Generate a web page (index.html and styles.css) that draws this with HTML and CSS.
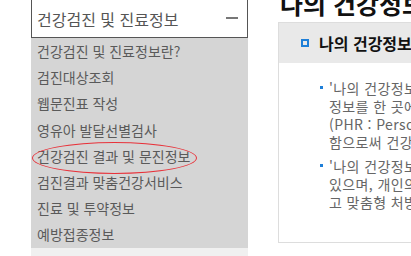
FILE: index.html
```html
<!DOCTYPE html>
<html lang="ko">
<head>
  <meta charset="UTF-8">
  <meta name="viewport" content="width=device-width, initial-scale=1.0">
  <title>나의 건강정보</title>
  <link rel="stylesheet" href="styles.css">
</head>
<body>
  <div class="page">
    <div class="sidebar">
      <div class="menu-head">
        <span>건강검진 및 진료정보</span>
        <span class="minus"></span>
      </div>
      <ul class="menu-list">
        <li>건강검진 및 진료정보란?</li>
        <li>검진대상조회</li>
        <li>웹문진표 작성</li>
        <li>영유아 발달선별검사</li>
        <li class="marked">건강검진 결과 및 문진정보<span class="circle"></span></li>
        <li>검진결과 맞춤건강서비스</li>
        <li>진료 및 투약정보</li>
        <li>예방접종정보</li>
      </ul>
      <div class="menu-next"></div>
    </div>

    <div class="content">
      <h2 class="page-title">나의 건강정보</h2>
      <div class="info-box">
        <div class="info-head">
          <span class="sq-icon"></span>
          <strong>나의 건강정보</strong>
        </div>
        <ul class="info-body">
          <li>'나의 건강정보'<br>정보를 한 곳에<br>(PHR : Personal<br>함으로써 건강</li>
          <li>'나의 건강정보'<br>있으며, 개인의<br>고 맞춤형 처방</li>
        </ul>
      </div>
    </div>
  </div>
</body>
</html>
```

FILE: styles.css
```css
body {
  margin: 0;
  font-family: "Noto Sans CJK KR", "Noto Sans", sans-serif;
  background: #fff;
  overflow: hidden;
}

.page {
  display: flex;
  width: 411px;
  height: 256px;
  overflow: hidden;
}

/* left menu */
.sidebar {
  flex: 0 0 217px;
  margin-left: 31px;
  margin-top: -1px;
}

.menu-head {
  display: flex;
  justify-content: space-between;
  align-items: center;
  height: 37px;
  padding: 0 9px 0 5px;
  border: 1px solid #555;
  color: #555;
  font-size: 16px;
}

.minus {
  width: 12px;
  height: 2px;
  background: #777;
  margin-top: -2px;
}

.menu-list {
  list-style: none;
  margin: 0;
  padding: 0 0 0 6px;
  background: #d5d5d5;
  color: #5a5a5a;
  font-size: 14px;
  line-height: 26.2px;
}

.marked {
  position: relative;
}

.circle {
  position: absolute;
  left: -5px;
  top: -1px;
  width: 163px;
  height: 30px;
  border: 1px solid #e8323a;
  border-radius: 50%;
}

.menu-next {
  height: 20px;
  background: #f0f0f0;
}

/* right content */
.content {
  flex: 0 0 auto;
  margin-left: 30px;
}

.page-title {
  margin: -12px 0 0 2px;
  height: 34px;
  font-size: 25px;
  line-height: 30px;
  font-weight: bold;
  color: #111;
  white-space: nowrap;
}

.info-box {
  width: 420px;
  border: 1px solid #ddd;
  white-space: nowrap;
}

.info-head {
  display: flex;
  align-items: center;
  height: 40px;
  padding-left: 22px;
  background: #e9e9e9;
  font-size: 16px;
  color: #111;
}

.sq-icon {
  width: 4px;
  height: 4px;
  border: 2px solid #1e7fd8;
  margin-right: 10px;
}

.info-body {
  list-style: none;
  margin: 0;
  padding: 16px 0 31px 50px;
  color: #666;
  font-size: 14px;
  letter-spacing: 0.4px;
  line-height: 18px;
}

.info-body li {
  position: relative;
  margin-bottom: 6px;
}

.info-body li:last-child {
  margin-bottom: 0;
}

.info-body li::before {
  content: "";
  position: absolute;
  left: -9px;
  top: 7px;
  width: 3px;
  height: 3px;
  background: #1e7fd8;
}
```
